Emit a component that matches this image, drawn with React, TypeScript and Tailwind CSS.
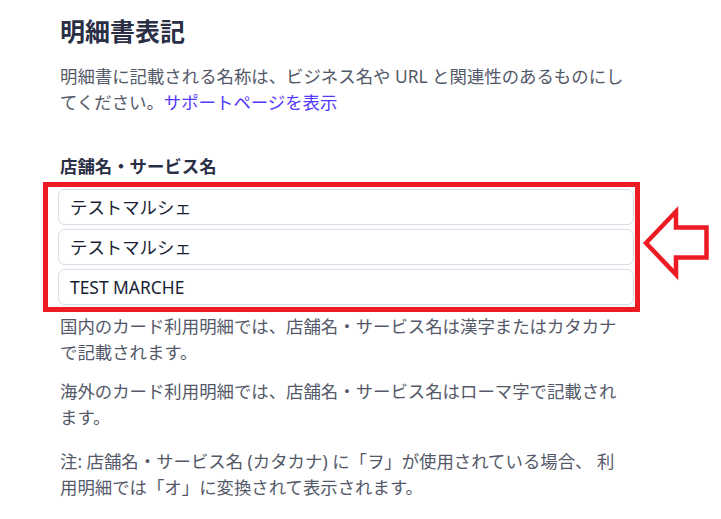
import React from 'react';

const fields = ['テストマルシェ', 'テストマルシェ', 'TEST MARCHE'];

const notes = [
  { text: '国内のカード利用明細では、店舗名・サービス名は漢字またはカタカナで記載されます。', mt: 'mt-[9px]' },
  { text: '海外のカード利用明細では、店舗名・サービス名はローマ字で記載されます。', mt: 'mt-[14px]' },
  { text: '注: 店舗名・サービス名 (カタカナ) に「ヲ」が使用されている場合、 利用明細では「オ」に変換されて表示されます。', mt: 'mt-[19px]' },
];

// 左向きの矢印（注釈）
const ArrowLeft = () => (
  <svg
    className="absolute left-[636px] top-[200px]"
    width="80"
    height="84"
    viewBox="636 200 80 84"
    fill="none"
  >
    <polygon
      points="646,243 676,211.5 676,227.5 706.5,227.5 706.5,257.5 676,257.5 676,274.5"
      stroke="#ed1c24"
      strokeWidth="4.5"
      strokeLinejoin="miter"
    />
  </svg>
);

export default function App() {
  return (
    <div className="relative w-[721px] h-[519px] overflow-hidden bg-white font-['Noto_Sans','Noto_Sans_CJK_JP',sans-serif]">
      <div className="ml-[58px] w-[576px] pt-[15px]">
        {/* 見出し */}
        <h2 className="pl-[2px] text-[25px] leading-[32px] font-bold text-[#2a2f45]">明細書表記</h2>

        {/* 説明 */}
        <p className="mt-[17px] pl-[2px] pr-[4px] text-[17.4px] leading-[25.5px] text-[#545969]">
          明細書に記載される名称は、ビジネス名や URL と関連性のあるものにしてください。
          <span className="text-[#533afd]">サポートページを表示</span>
        </p>

        {/* ラベル */}
        <div className="mt-[39px] pl-[2px] text-[17.4px] leading-[25.5px] font-bold text-[#2a2f45]">
          店舗名・サービス名
        </div>

        {/* 入力欄 */}
        <div className="mt-[9.5px] flex flex-col gap-[4px]">
          {fields.map((value, i) => (
            <div
              key={i}
              className="h-[36px] flex items-center px-[11px] rounded-[7px] border border-[#d8dde6] bg-white text-[17.4px] text-[#1a1f36] shadow-[0_1px_1px_rgba(0,0,0,0.03)]"
            >
              {value}
            </div>
          ))}
        </div>

        {/* 注記 */}
        {notes.map((n, i) => (
          <p key={i} className={`${n.mt} pl-[2px] pr-[4px] text-[17.4px] leading-[25.5px] text-[#545969]`}>
            {n.text}
          </p>
        ))}
      </div>

      {/* 赤枠の注釈 */}
      <div className="absolute left-[43px] top-[182px] w-[597px] h-[130px] border-[5px] border-[#ed1c24]" />
      <ArrowLeft />
    </div>
  );
}
